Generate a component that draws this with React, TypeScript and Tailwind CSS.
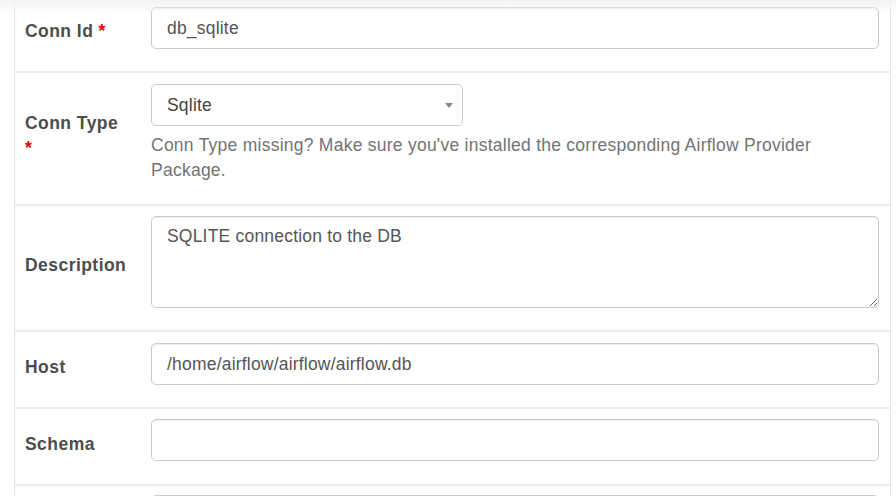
import React from "react";

const inputCls =
  "w-full h-[42px] border border-[#ccc] rounded-[5px] bg-white px-[15px] text-[17.5px] tracking-[0.2px] text-[#555] flex items-center shadow-[inset_0_1px_1px_rgba(0,0,0,0.075)]";

function Label({ text, required, wrap }: { text: string; required?: boolean; wrap?: boolean }) {
  return (
    <div className="w-[126px] shrink-0 px-[10px] pb-[5px] flex items-center">
      <div className="font-bold text-[17.5px] leading-[25px] tracking-[0.45px] text-[#4d4d4d]">
        {text}
        {required && wrap && <br />}
        {required && (
          <span className="text-[#e00] font-bold">{wrap ? "*" : " *"}</span>
        )}
      </div>
    </div>
  );
}

export default function App() {
  return (
    <div className="relative w-[896px] h-[496px] overflow-hidden bg-white font-['Liberation_Sans',Arial,sans-serif]">
      {/* faint shadow from the header above */}
      <div className="absolute top-0 left-0 right-0 h-[14px] bg-gradient-to-b from-[#f3f3f3] to-transparent pointer-events-none z-10" />

      <div className="ml-[14px] w-[877px] -mt-[3px] border-l border-r border-[#e3e3e3]">
        {/* Conn Id */}
        <div className="flex h-[76px] border-b-2 border-[#eee]">
          <Label text="Conn Id" required />
          <div className="flex-1 pt-[10px] pl-[10px] pr-[11px]">
            <div className={inputCls}>db_sqlite</div>
          </div>
        </div>

        {/* Conn Type */}
        <div className="flex h-[133px] border-b-2 border-[#eee]">
          <Label text="Conn Type" required wrap />
          <div className="flex-1 pt-[11px] pl-[10px] pr-[11px]">
            <div className="relative w-[312px] h-[42px] border border-[#ccc] rounded-[5px] bg-white px-[15px] text-[17.5px] tracking-[0.2px] text-[#444] flex items-center">
              Sqlite
              <span className="absolute right-[9px] top-[18px] w-0 h-0 border-l-[4px] border-r-[4px] border-t-[5px] border-l-transparent border-r-transparent border-t-[#888]" />
            </div>
            <p className="mt-[7px] text-[17.5px] leading-[25px] tracking-[0.25px] text-[#737373]">
              Conn Type missing? Make sure you've installed the corresponding Airflow Provider Package.
            </p>
          </div>
        </div>

        {/* Description */}
        <div className="flex h-[126px] border-b-2 border-[#eee]">
          <Label text="Description" />
          <div className="flex-1 pt-[10px] pl-[10px] pr-[11px]">
            <textarea
              readOnly
              value="SQLITE connection to the DB"
              className="block w-full h-[92px] border border-[#ccc] rounded-[5px] bg-white px-[15px] py-[7px] text-[17.5px] leading-[25px] tracking-[0.2px] text-[#555] outline-none shadow-[inset_0_1px_1px_rgba(0,0,0,0.075)] font-['Liberation_Sans',Arial,sans-serif]"
            />
          </div>
        </div>

        {/* Host */}
        <div className="flex h-[77px] border-b-2 border-[#eee]">
          <Label text="Host" />
          <div className="flex-1 pt-[11px] pl-[10px] pr-[11px]">
            <div className={inputCls}>/home/airflow/airflow/airflow.db</div>
          </div>
        </div>

        {/* Schema */}
        <div className="flex h-[77px] border-b-2 border-[#eee]">
          <Label text="Schema" />
          <div className="flex-1 pt-[10px] pl-[10px] pr-[11px]">
            <div className={inputCls} />
          </div>
        </div>

        {/* next row, cut off */}
        <div className="flex h-[60px]">
          <Label text="" />
          <div className="flex-1 pt-[9px] pl-[10px] pr-[11px]">
            <div className={inputCls} />
          </div>
        </div>
      </div>
    </div>
  );
}
